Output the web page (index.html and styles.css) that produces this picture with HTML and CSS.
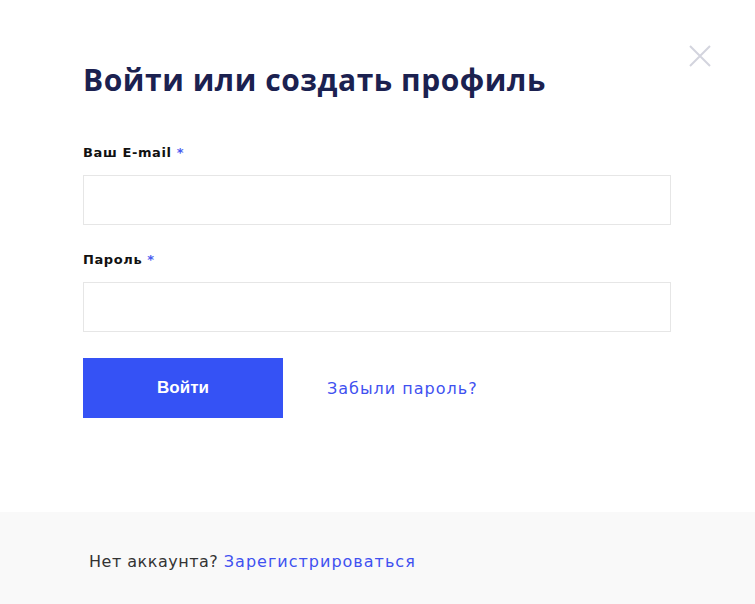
FILE: index.html
```html
<!DOCTYPE html>
<html lang="ru">
<head>
    <meta charset="UTF-8">
    <meta name="viewport" content="width=device-width, initial-scale=1.0">
    <title>Вход</title>
    <link rel="stylesheet" href="styles.css">
</head>
<body>
    <div class="modal">
        <button class="close" type="button" aria-label="Закрыть">
            <svg width="22" height="22" viewBox="0 0 22 22">
                <path d="M1 1L21 21M21 1L1 21" stroke="#d3d4de" stroke-width="2" fill="none"/>
            </svg>
        </button>
        <div class="modal-body">
            <h1 class="title">Войти или создать профиль</h1>
            <form class="login-form">
                <label class="label" for="email">Ваш E-mail <span class="req">*</span></label>
                <input class="field" type="email" id="email">
                <label class="label" for="password">Пароль <span class="req">*</span></label>
                <input class="field" type="password" id="password">
                <div class="actions">
                    <button type="submit" class="button">Войти</button>
                    <a href="#" class="link">Забыли пароль?</a>
                </div>
            </form>
        </div>
        <div class="modal-footer">
            Нет аккаунта? <a href="#" class="link">Зарегистрироваться</a>
        </div>
    </div>
</body>
</html>
```

FILE: styles.css
```css
body {
    margin: 0;
    padding: 0;
    background: #fff;
    font-family: "DejaVu Sans", "Open Sans", sans-serif;
}
.modal {
    position: relative;
    width: 755px;
    height: 604px;
    display: flex;
    flex-direction: column;
}
.close {
    position: absolute;
    top: 45px;
    right: 44px;
    padding: 0;
    border: none;
    background: none;
    cursor: pointer;
    line-height: 0;
}
.modal-body {
    flex: 1;
    padding: 58px 85px 0 83px;
}
.title {
    margin: 0 0 42px;
    font-family: "Open Sans", sans-serif;
    font-size: 30px;
    font-weight: 700;
    line-height: 44px;
    color: #1b2150;
    letter-spacing: 0.55px;
}
.login-form {
    display: flex;
    flex-direction: column;
}
.label {
    font-size: 13px;
    font-weight: 700;
    color: #111;
    line-height: 18px;
    letter-spacing: 0.6px;
    margin-bottom: 13px;
}
.req {
    color: #4a5cf0;
}
.field {
    box-sizing: border-box;
    width: 588px;
    height: 50px;
    border: 1px solid #e6e6e6;
    margin: 0 0 26px;
    padding: 0 15px;
    font-size: 15px;
    outline: none;
}
.actions {
    display: flex;
    align-items: center;
    gap: 44px;
}
.button {
    width: 200px;
    height: 60px;
    border: none;
    background: #3552f5;
    color: #fff;
    font-family: "Liberation Sans", Arial, sans-serif;
    font-size: 17px;
    font-weight: 700;
    cursor: pointer;
}
.link {
    color: #3f51f0;
    text-decoration: none;
    font-size: 16px;
    letter-spacing: 1px;
}
.modal-footer {
    height: 92px;
    box-sizing: border-box;
    background: #f9f9f9;
    padding: 40px 0 0 89px;
    font-size: 16px;
    letter-spacing: 0.5px;
    color: #333;
}
```
